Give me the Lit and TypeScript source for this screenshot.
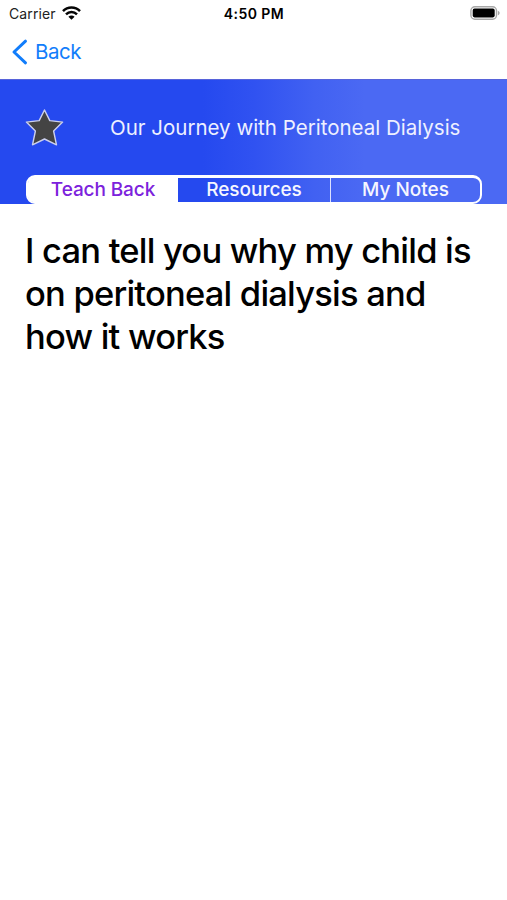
import { LitElement, html, css } from "lit";
import { customElement } from "lit/decorators.js";

@customElement("app-root")
class AppRoot extends LitElement {
  static styles = css`
    :host { display: block; width: 507px; height: 900px; overflow: hidden; background: #fff; font-family: Inter, "Liberation Sans", sans-serif; color: #000; }
    * { box-sizing: border-box; }
    .status { height: 27px; display: grid; grid-template-columns: 1fr 1fr 1fr; align-items: center; padding: 0 7px 0 9px; font-size: 14px; line-height: 27px; }
    .carrier { display: flex; align-items: center; gap: 6px; color: #222; }
    .carrier span { letter-spacing: 0.1px; }
    .time { text-align: center; font-weight: 600; letter-spacing: 0.42px; white-space: nowrap; margin-left: -1px; }
    .battery { justify-self: end; margin-top: -1px; }
    .carrier svg { margin-top: -2px; }
    svg { display: block; }
    .nav { height: 52px; display: flex; align-items: flex-start; padding: 12px 0 0 11px; gap: 7px; color: #117dfb; font-size: 20.5px; line-height: 26px; }
    .nav span { letter-spacing: -0.5px; }
    .header { height: 125px; border-top: 1px solid #5763da; background: linear-gradient(90deg, #2549ef 0%, #2549ef 40%, #3052f1 50%, #4161f2 62%, #4b69f3 72%, #4b69f3 100%); padding: 0 25px 0 26px; }
    .top { height: 95px; display: flex; align-items: center; }
    .star { margin-left: -2px; }
    .title { color: #eef0ff; font-size: 20.5px; margin-left: 45px; white-space: nowrap; }
    .tabs { height: 29px; border: 2px solid #fff; border-top-width: 3px; border-radius: 9px; display: grid; grid-template-columns: 150px 152px 1fr; font-size: 19px; font-weight: 500; line-height: 24px; text-align: center; color: #f5f6ff; }
    .tab { white-space: nowrap; }
    .tab + .tab + .tab { border-left: 1.5px solid #dce1ff; }
    .tab.on { background: #fff; color: #7c22dc; border-radius: 5px 0 0 5px; letter-spacing: -0.1px; }
    .question { margin: 25px 0 0 25px; font-size: 34.5px; font-weight: 500; line-height: 43px; letter-spacing: -0.79px; }
    .line { display: block; white-space: nowrap; }
  `;

  render() {
    return html`
      <div class="status">
        <div class="carrier"><span>Carrier</span>
          <svg width="19" height="14" viewBox="0 0 19 14" fill="none" stroke="#050505" stroke-width="2.5">
            <path d="M1 5.2C5.7.4 13.3.4 18 5.2M4 8.4c3.1-3.1 7.9-3.1 11 0"/>
            <path d="M6.4 10.8c1.8-1.7 4.4-1.7 6.2 0L9.5 13.8z" fill="#050505" stroke="none"/>
          </svg>
        </div>
        <div class="time">4:50 PM</div>
        <svg class="battery" width="31" height="16" viewBox="0 0 31 16">
          <rect x="1.9" y="1.7" width="25.6" height="12.6" rx="4" fill="#fff" stroke="#a8a8a8" stroke-width="1.4"/>
          <rect x="3.7" y="3.6" width="22" height="8.8" rx="1.8" fill="#000"/>
          <path d="M28.9 5.7c2.3.8 2.3 3.8 0 4.6z" fill="#a8a8a8"/>
        </svg>
      </div>
      <div class="nav">
        <svg width="17" height="26" viewBox="0 0 17 26" fill="none" stroke="#117dfb" stroke-width="3" stroke-linecap="round" stroke-linejoin="round"><path d="M14.5 2.2L3 13l11.5 10.8"/></svg>
        <span>Back</span>
      </div>
      <div class="header">
        <div class="top">
          <svg class="star" width="41" height="41" viewBox="0 0 41 41"><path d="M20.5 3L25.8 13.6L38.6 15.1L29.6 24L32.5 37.8L20.5 32L8.5 37.8L11.4 24L2.4 15.1L15.2 13.6z" fill="#444" stroke="#ccd0ee" stroke-width="1.4" stroke-linejoin="round"/></svg>
          <div class="title">Our Journey with Peritoneal Dialysis</div>
        </div>
        <div class="tabs">
          <div class="tab on">Teach Back</div><div class="tab">Resources</div><div class="tab">My Notes</div>
        </div>
      </div>
      <div class="question">
        <span class="line">I can tell you why my child is</span>
        <span class="line">on peritoneal dialysis and</span>
        <span class="line">how it works</span>
      </div>`;
  }
}
